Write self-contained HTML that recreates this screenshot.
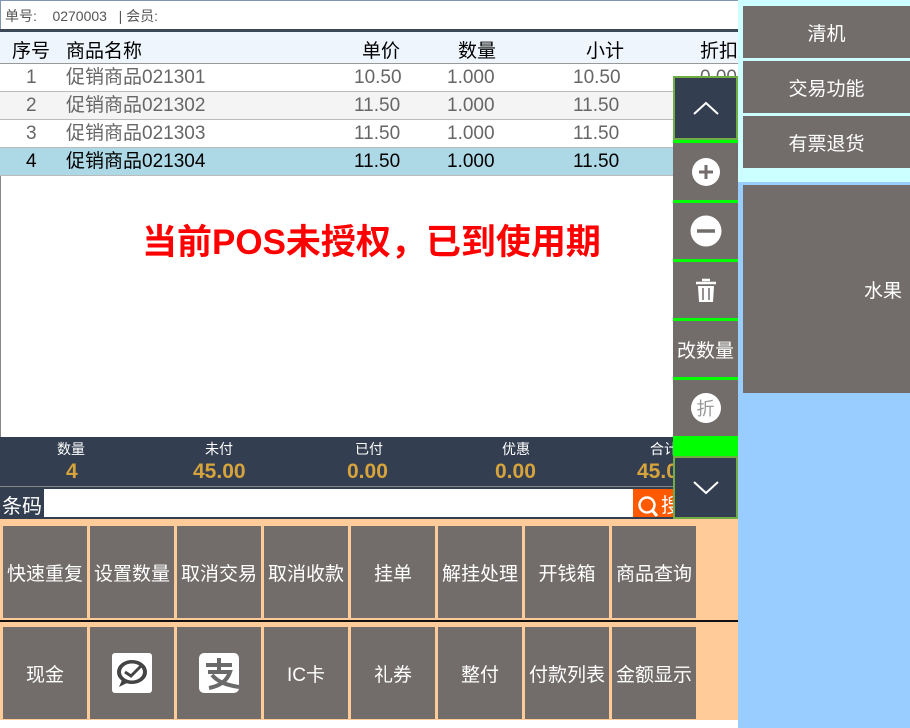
<!DOCTYPE html>
<html><head><meta charset="utf-8"><style>
*{margin:0;padding:0;box-sizing:border-box}
body{width:910px;height:728px;position:relative;overflow:hidden;font-family:"Liberation Sans","Noto Sans CJK SC",sans-serif;background:#000}
.a{position:absolute}
.g{background:#726d6b;color:#fff;display:flex;align-items:center;justify-content:center;font-size:19px}
.row{position:absolute;left:0;width:738px;height:28px;font-size:19px;color:#666}
.row span{position:absolute;top:0;line-height:28px;height:28px}
</style></head><body>
<div class="a" style="left:0;top:0;width:738px;height:728px;background:#fff"></div>
<div class="a" style="left:0;top:0;width:738px;height:30px;border:1px solid #8095b0;border-right:none;font-size:14px;color:#555;padding:5px 4px">单号:&nbsp;&nbsp;&nbsp; 0270003 &nbsp;&nbsp;| 会员:</div>
<div class="a" style="left:0;top:29px;width:738px;height:3px;background:#3c4858"></div>
<div class="a" style="left:0;top:32px;width:738px;height:32px;background:#eef5fd;border-bottom:1px solid #999;font-size:19px;color:#000">
<span class="a" style="left:12px;top:4px">序号</span><span class="a" style="left:66px;top:4px">商品名称</span><span class="a" style="left:362px;top:4px">单价</span><span class="a" style="left:458px;top:4px">数量</span><span class="a" style="left:586px;top:4px">小计</span><span class="a" style="left:700px;top:4px">折扣</span></div>
<div class="row" style="top:64px;border-bottom:1px solid #bbb"><span style="left:26px">1</span><span style="left:66px">促销商品021301</span><span style="left:354px">10.50</span><span style="left:447px">1.000</span><span style="left:573px">10.50</span><span style="left:700px">0.00</span></div>
<div class="row" style="top:92px;background:#f4f4f4;border-bottom:1px solid #bbb"><span style="left:26px">2</span><span style="left:66px">促销商品021302</span><span style="left:354px">11.50</span><span style="left:447px">1.000</span><span style="left:573px">11.50</span></div>
<div class="row" style="top:120px;border-bottom:1px solid #bbb"><span style="left:26px">3</span><span style="left:66px">促销商品021303</span><span style="left:354px">11.50</span><span style="left:447px">1.000</span><span style="left:573px">11.50</span></div>
<div class="row" style="top:148px;background:#add8e6;color:#000;border-bottom:1px solid #bbb"><span style="left:26px">4</span><span style="left:66px">促销商品021304</span><span style="left:354px">11.50</span><span style="left:447px">1.000</span><span style="left:573px">11.50</span></div>
<div class="a" style="left:142px;top:214px;font-size:35px;font-weight:bold;color:#f00;white-space:nowrap">当前POS未授权，已到使用期</div>
<div class="a" style="left:0;top:176px;width:1px;height:261px;background:#888"></div>
<div class="a" style="left:0;top:437px;width:738px;height:50px;background:#333f50;border-bottom:1px solid #888"></div>
<div class="a" style="top:439px;left:0;width:738px;color:#fff;font-size:14px">
<span class="a" style="left:57px">数量</span><span class="a" style="left:205px">未付</span><span class="a" style="left:355px">已付</span><span class="a" style="left:502px">优惠</span><span class="a" style="left:650px">合计</span></div>
<div class="a" style="top:460px;left:0;width:738px;color:#d6a33c;font-size:21px;font-weight:bold">
<span class="a" style="left:66px">4</span><span class="a" style="left:193px">45.00</span><span class="a" style="left:347px">0.00</span><span class="a" style="left:495px">0.00</span><span class="a" style="left:637px">45.00</span></div>
<div class="a" style="left:0;top:487px;width:738px;height:32px;background:#333f50"></div>
<div class="a" style="left:2px;top:490px;color:#fff;font-size:20px">条码</div>
<div class="a" style="left:44px;top:489px;width:589px;height:28px;background:#fff"></div>
<div class="a" style="left:633px;top:489px;width:50px;height:28px;background:#ff5a00;color:#fff;font-size:20px;padding-left:4px">
<svg width="24" height="26" viewBox="0 0 24 26" style="vertical-align:middle"><circle cx="10" cy="11" r="7.5" fill="none" stroke="#fff" stroke-width="2.5"/><path d="M15 16l5 6" stroke="#fff" stroke-width="3"/></svg>搜</div>
<div class="a" style="left:0;top:519px;width:738px;height:201px;background:#ffcc99"></div>
<div class="a" style="left:0;top:620px;width:738px;height:2px;background:#111"></div>
<div class="a g" style="left:3px;top:526px;width:84px;height:92px">快速重复</div>
<div class="a g" style="left:90px;top:526px;width:84px;height:92px">设置数量</div>
<div class="a g" style="left:177px;top:526px;width:84px;height:92px">取消交易</div>
<div class="a g" style="left:264px;top:526px;width:84px;height:92px">取消收款</div>
<div class="a g" style="left:351px;top:526px;width:84px;height:92px">挂单</div>
<div class="a g" style="left:438px;top:526px;width:84px;height:92px">解挂处理</div>
<div class="a g" style="left:525px;top:526px;width:84px;height:92px">开钱箱</div>
<div class="a g" style="left:612px;top:526px;width:84px;height:92px">商品查询</div>
<div class="a g" style="left:3px;top:627px;width:84px;height:92px">现金</div>
<div class="a g" style="left:90px;top:627px;width:84px;height:92px"><svg width="40" height="40" viewBox="0 0 40 40"><rect width="40" height="40" rx="3" fill="#fff"/><ellipse cx="20" cy="19" rx="15" ry="12" fill="#444"/><path d="M10 27l-3 7 10-5z" fill="#444"/><ellipse cx="20" cy="19" rx="11" ry="8.5" fill="#fff"/><path d="M13 19l6 4 10-10" stroke="#444" stroke-width="3" fill="none"/></svg></div>
<div class="a g" style="left:177px;top:627px;width:84px;height:92px"><svg width="40" height="40" viewBox="0 0 40 40"><rect width="40" height="40" rx="5" fill="#fff"/><path d="M7 12h26M20 5v13M9 19h22c-3 9-10 14-21 16M13 22c6 7 14 10 27 12" stroke="#6a6a6a" stroke-width="4" fill="none"/></svg></div>
<div class="a g" style="left:264px;top:627px;width:84px;height:92px">IC卡</div>
<div class="a g" style="left:351px;top:627px;width:84px;height:92px">礼券</div>
<div class="a g" style="left:438px;top:627px;width:84px;height:92px">整付</div>
<div class="a g" style="left:525px;top:627px;width:84px;height:92px">付款列表</div>
<div class="a g" style="left:612px;top:627px;width:84px;height:92px">金额显示</div>
<div class="a" style="left:673px;top:76px;width:65px;height:443px;background:#333f50"></div>
<div class="a" style="left:673px;top:76px;width:65px;height:64px;background:#333f50;border:2px solid #70ad47;display:flex;align-items:center;justify-content:center"><svg width="26" height="14"><path d="M1 13L13 2 25 13" stroke="#fff" stroke-width="2" fill="none"/></svg></div>
<div class="a" style="left:673px;top:140px;width:65px;height:3px;background:#0f0"></div>
<div class="a g" style="left:673px;top:143px;width:65px;height:57px"><svg width="30" height="30"><circle cx="15" cy="15" r="14" fill="#fff"/><path d="M8 15h14M15 8v14" stroke="#726d6b" stroke-width="3"/></svg></div>
<div class="a" style="left:673px;top:200px;width:65px;height:3px;background:#0f0"></div>
<div class="a g" style="left:673px;top:203px;width:65px;height:56px"><svg width="32" height="32"><circle cx="16" cy="16" r="15.5" fill="#fff"/><path d="M7 16h18" stroke="#726d6b" stroke-width="3.5"/></svg></div>
<div class="a" style="left:673px;top:259px;width:65px;height:3px;background:#0f0"></div>
<div class="a g" style="left:673px;top:262px;width:65px;height:56px"><svg width="24" height="26" viewBox="0 0 24 26"><path d="M8 3h8M2 6h20" stroke="#fff" stroke-width="2.5"/><path d="M4 9h16l-1 16H5z" fill="#fff"/><path d="M9 11v12M15 11v12" stroke="#726d6b" stroke-width="1.5"/></svg></div>
<div class="a" style="left:673px;top:318px;width:65px;height:3px;background:#0f0"></div>
<div class="a g" style="left:673px;top:321px;width:65px;height:56px;font-size:19px">改数量</div>
<div class="a" style="left:673px;top:377px;width:65px;height:3px;background:#0f0"></div>
<div class="a g" style="left:673px;top:380px;width:65px;height:56px"><div style="width:30px;height:30px;border-radius:50%;background:#fff;color:#999;font-size:18px;display:flex;align-items:center;justify-content:center">折</div></div>
<div class="a" style="left:673px;top:436px;width:65px;height:20px;background:#0f0"></div>
<div class="a" style="left:673px;top:456px;width:65px;height:63px;background:#333f50;border:2px solid #70ad47;display:flex;align-items:center;justify-content:center"><svg width="26" height="14"><path d="M1 1L13 12 25 1" stroke="#fff" stroke-width="2" fill="none"/></svg></div>
<div class="a" style="left:738px;top:0;width:172px;height:182px;background:#ccffff"></div>
<div class="a" style="left:738px;top:182px;width:172px;height:546px;background:#99ccff"></div>
<div class="a g" style="left:743px;top:6px;width:167px;height:52px">清机</div>
<div class="a g" style="left:743px;top:61px;width:167px;height:52px">交易功能</div>
<div class="a g" style="left:743px;top:116px;width:167px;height:52px">有票退货</div>
<div class="a g" style="left:743px;top:185px;width:167px;height:208px;justify-content:flex-end;padding-right:8px">水果</div>
</body></html>
